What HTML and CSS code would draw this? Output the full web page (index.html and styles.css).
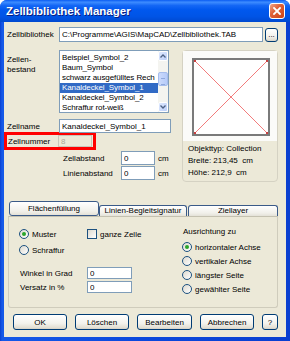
FILE: index.html
```html
<!DOCTYPE html>
<html lang="de">
<head>
  <meta charset="UTF-8">
  <meta name="viewport" content="width=device-width, initial-scale=1.0">
  <title>Zellbibliothek Manager</title>
  <link rel="stylesheet" href="styles.css">
</head>
<body>
  <div class="window">
    <div class="titlebar">
      <span class="title">Zellbibliothek Manager</span>
      <span class="close">
        <svg width="8" height="8" viewBox="0 0 8 8"><path d="M1 1L7 7M7 1L1 7" stroke="#fff" stroke-width="1.8" stroke-linecap="square"/></svg>
      </span>
    </div>

    <div class="frame">
      <div class="row-lib">
        <span class="lbl">Zellbibliothek</span>
        <input class="field lib-path" type="text" value="C:\Programme\AGIS\MapCAD\Zellbibliothek.TAB" readonly>
        <button class="btn dots">...</button>
      </div>

      <div class="main">
        <div class="left">
          <div class="row-list">
            <span class="lbl lbl-2">Zellen-<br>bestand</span>
            <div class="listbox">
              <ul class="items">
                <li>Beispiel_Symbol_2</li>
                <li>Baum_Symbol</li>
                <li>schwarz ausgefülltes Rech</li>
                <li class="sel">Kanaldeckel_Symbol_1</li>
                <li>Kanaldeckel_Symbol_2</li>
                <li>Schraffur rot-weiß</li>
              </ul>
              <div class="scrollbar">
                <span class="sb-btn">
                  <svg width="6" height="4" viewBox="0 0 6 4"><path d="M0.5 3.5L3 1L5.5 3.5" fill="none" stroke="#4d6185" stroke-width="1.3"/></svg>
                </span>
                <div class="sb-track">
                  <span class="sb-thumb"></span>
                </div>
                <span class="sb-btn">
                  <svg width="6" height="4" viewBox="0 0 6 4"><path d="M0.5 0.5L3 3L5.5 0.5" fill="none" stroke="#4d6185" stroke-width="1.3"/></svg>
                </span>
              </div>
            </div>
          </div>

          <div class="row-name">
            <span class="lbl">Zellname</span>
            <input class="field name" type="text" value="Kanaldeckel_Symbol_1" readonly>
          </div>

          <div class="row-num">
            <span class="lbl">Zellnummer</span>
            <input class="field num" type="text" value="8" disabled>
          </div>

          <div class="row-abs">
            <span class="abs-lbl">Zellabstand</span>
            <input class="field abs" type="text" value="0" readonly>
            <span class="unit">cm</span>
          </div>
          <div class="row-abs">
            <span class="abs-lbl">Linienabstand</span>
            <input class="field abs" type="text" value="0" readonly>
            <span class="unit">cm</span>
          </div>
        </div>

        <div class="preview">
          <div class="pic">
            <svg class="square" width="78" height="78" viewBox="0 0 78 78">
              <rect x="1" y="1" width="76" height="76" fill="#fff" stroke="#7a7a7a" stroke-width="2"/>
              <path d="M2 2L76 76M76 2L2 76" stroke="#f27c7c" stroke-width="1"/>
              <rect x="2" y="2" width="2" height="2" fill="#c84040"/>
              <rect x="74" y="2" width="2" height="2" fill="#c84040"/>
              <rect x="2" y="74" width="2" height="2" fill="#c84040"/>
              <rect x="74" y="74" width="2" height="2" fill="#c84040"/>
            </svg>
          </div>
          <div class="info">
            <div>Objekttyp: Collection</div>
            <div>Breite: 213,45&nbsp; cm</div>
            <div>Höhe: 212,9&nbsp; cm</div>
          </div>
        </div>
      </div>

      <div class="tabs">
        <span class="tab active">Flächenfüllung</span>
        <span class="tab t2">Linien-Begleitsignatur</span>
        <span class="tab t3">Ziellayer</span>
      </div>

      <div class="panel">
        <div class="pcol-left">
          <div class="prow">
            <span class="opt"><span class="radio on"></span><span class="txt">Muster</span></span>
            <span class="check"></span><span class="txt">ganze Zelle</span>
          </div>
          <div class="prow second">
            <span class="opt"><span class="radio"></span><span class="txt">Schraffur</span></span>
          </div>
          <div class="frow first">
            <span class="flbl">Winkel in Grad</span>
            <input class="field small" type="text" value="0" readonly>
          </div>
          <div class="frow">
            <span class="flbl">Versatz in %</span>
            <input class="field small" type="text" value="0" readonly>
          </div>
        </div>
        <div class="pcol-right">
          <div class="head">Ausrichtung zu</div>
          <div class="rrow"><span class="radio on"></span><span class="txt">horizontaler Achse</span></div>
          <div class="rrow"><span class="radio"></span><span class="txt">vertikaler Achse</span></div>
          <div class="rrow"><span class="radio"></span><span class="txt">längster Seite</span></div>
          <div class="rrow"><span class="radio"></span><span class="txt">gewählter Seite</span></div>
        </div>
      </div>

      <div class="buttons">
        <button class="btn w54">OK</button>
        <button class="btn w54">Löschen</button>
        <button class="btn w55">Bearbeiten</button>
        <button class="btn w54">Abbrechen</button>
        <button class="btn help">?</button>
      </div>
    </div>
  </div>
</body>
</html>
```

FILE: styles.css
```css
body {
  margin: 0;
  background: #fff;
  font-family: "Liberation Sans", Arial, sans-serif;
  font-size: 8px;
  color: #000;
}

.window {
  width: 290px;
  height: 341px;
  display: flex;
  flex-direction: column;
  background: linear-gradient(to right, #0a3fd0, #1559e8 2px, #0b48dc 50%, #0a3fd0);
  border-radius: 7px 7px 0 0;
  overflow: hidden;
}

.titlebar {
  height: 22px;
  flex: none;
  display: flex;
  align-items: center;
  padding: 0 5px 0 6px;
  background: linear-gradient(to bottom, #0a5cf2 0%, #3d8cff 10%, #1467f5 25%, #0058ee 45%, #0054e6 75%, #0049d0 100%);
}

.title {
  color: #fff;
  font-weight: bold;
  font-size: 11.5px;
  text-shadow: 1px 1px #0a1e80;
}

.close {
  margin-left: auto;
  width: 16px;
  height: 16px;
  box-sizing: border-box;
  border: 1px solid #fff;
  border-radius: 3px;
  background: linear-gradient(135deg, #efa58a 0%, #e0623a 40%, #cc4215 100%);
  display: flex;
  align-items: center;
  justify-content: center;
}

.frame {
  flex: 1;
  margin: 0 4px 4px 4px;
  background: #ece9d8;
  padding: 5px 0 0 3px;
}

.lbl {
  width: 52px;
  flex: none;
  white-space: nowrap;
}

.field {
  font: inherit;
  font-size: 8px;
  color: #000;
  box-sizing: border-box;
  border: 1px solid #7f9db9;
  background: #fff;
  padding: 0 2px;
  margin: 0;
  outline: none;
}

.btn {
  font: inherit;
  font-size: 8px;
  color: #000;
  box-sizing: border-box;
  border: 1px solid #003c74;
  border-radius: 3px;
  background: linear-gradient(to bottom, #fff 0%, #f3f2ec 60%, #e3dfd3 90%, #d6d0c5 100%);
  padding: 0;
  margin: 0;
}

.row-lib {
  display: flex;
  align-items: center;
  height: 15px;
}

.lib-path {
  width: 204px;
  height: 15px;
}

.dots {
  width: 13px;
  height: 14px;
  margin-left: 2px;
  line-height: 8px;
}

.main {
  display: flex;
  margin-top: 8px;
  height: 132px;
}

.left {
  width: 166px;
  flex: none;
}

.row-list {
  display: flex;
}

.lbl-2 {
  padding-top: 5px;
  line-height: 10px;
}

.listbox {
  width: 110px;
  height: 63px;
  box-sizing: border-box;
  border: 1px solid #7f9db9;
  background: #fff;
  display: flex;
}

.items {
  flex: 1;
  min-width: 0;
  list-style: none;
  margin: 0;
  padding: 2px 0 0 0;
  overflow: hidden;
}

.items li {
  height: 10px;
  line-height: 10px;
  padding-left: 2px;
  white-space: nowrap;
  letter-spacing: -0.1px;
}

.items li.sel {
  background: #316ac5;
  color: #fff;
}

.scrollbar {
  width: 10px;
  flex: none;
  display: flex;
  flex-direction: column;
  background: #f4f4f0;
}

.sb-btn {
  height: 10px;
  flex: none;
  box-sizing: border-box;
  border: 1px solid #fff;
  border-radius: 2px;
  background: linear-gradient(to bottom right, #dfe9fe, #bccffa);
  display: flex;
  align-items: center;
  justify-content: center;
}

.sb-track {
  flex: 1;
  padding-top: 11px;
}

.sb-thumb {
  display: block;
  height: 14px;
  box-sizing: border-box;
  border: 1px solid #a6bdec;
  border-radius: 2px;
  background-image: repeating-linear-gradient(to bottom, transparent 0 4px, #8ea8dd 4px 5px, transparent 5px 6px), linear-gradient(to right, #cbdafc, #b6cbf9);
  background-size: 4px 12px, 100% 100%;
  background-position: center 1px, 0 0;
  background-repeat: no-repeat;
}

.row-name {
  display: flex;
  align-items: center;
  margin-top: 6px;
}

.name {
  width: 112px;
  height: 14px;
}

.row-num {
  display: flex;
  align-items: center;
  width: 92px;
  height: 18px;
  box-sizing: border-box;
  border: 3px solid #f00;
  margin: -1px 0 0 -3px;
  padding-left: 1px;
}

.row-num .lbl {
  width: 50px;
}

.num {
  width: 34px;
  height: 12px;
  background: #ece9d8;
  border-color: #c9c7ba;
  color: #aca899;
}

.row-abs {
  display: flex;
  align-items: center;
  height: 14px;
  margin-top: 1px;
  padding-left: 56px;
}

.abs-lbl {
  width: 58px;
  flex: none;
}

.abs {
  width: 34px;
  height: 14px;
}

.unit {
  margin-left: 3px;
}

.preview {
  width: 96px;
  height: 132px;
  box-sizing: border-box;
  margin-left: 9px;
  border: 1px solid #d5d2c3;
  border-radius: 4px;
}

.pic {
  height: 90px;
  box-sizing: border-box;
  padding: 7px 0 0 9px;
  background: #fbfbf9;
}

.square {
  display: block;
}

.info {
  padding: 2px 0 0 5px;
  line-height: 12px;
}

.tabs {
  display: flex;
  align-items: flex-end;
  height: 15px;
  margin: 19px 0 0 2px;
}

.tab {
  box-sizing: border-box;
  height: 11px;
  border: 1px solid #3a5a88;
  border-bottom: none;
  border-radius: 3px 3px 0 0;
  background: linear-gradient(to bottom, #fff, #f1f0ea 70%, #e4e2d8);
  text-align: center;
  line-height: 10px;
  white-space: nowrap;
  overflow: hidden;
}

.tab.active {
  width: 90px;
  height: 15px;
  line-height: 13px;
  border-bottom: 1px solid #3a5a88;
  border-radius: 3px;
}

.t2 {
  width: 88px;
}

.t3 {
  width: 90px;
  margin-left: 1px;
}

.panel {
  display: flex;
  width: 270px;
  height: 92px;
  box-sizing: border-box;
  margin-left: 1px;
  border: 1px solid #cfccbc;
  border-top-color: #c4c1b0;
  border-radius: 0 0 3px 3px;
}

.pcol-left {
  width: 173px;
  flex: none;
  box-sizing: border-box;
  padding: 12px 0 0 10px;
}

.prow {
  display: flex;
  align-items: center;
  height: 10px;
}

.prow.second {
  margin-top: 6px;
}

.opt {
  width: 68px;
  display: flex;
  align-items: center;
}

.txt {
  margin-left: 3px;
  white-space: nowrap;
}

.radio {
  width: 10px;
  height: 10px;
  flex: none;
  box-sizing: border-box;
  border: 1px solid #1c5180;
  border-radius: 50%;
  background: linear-gradient(to bottom right, #dcd9cf, #fff);
  display: flex;
  align-items: center;
  justify-content: center;
}

.radio.on::after {
  content: "";
  width: 4px;
  height: 4px;
  border-radius: 50%;
  background: #2aa52a;
}

.check {
  width: 10px;
  height: 10px;
  flex: none;
  box-sizing: border-box;
  border: 1px solid #1c5180;
  background: linear-gradient(to bottom right, #dcd9cf, #fff);
}

.frow {
  display: flex;
  align-items: center;
  height: 12px;
  margin-top: 2px;
}

.frow.first {
  margin-top: 12px;
}

.flbl {
  width: 67px;
  margin-left: 1px;
}

.small {
  width: 45px;
  height: 12px;
}

.pcol-right {
  padding-top: 10px;
}

.head {
  line-height: 10px;
  margin-left: 1px;
}

.rrow {
  display: flex;
  align-items: center;
  height: 10px;
  margin-top: 4px;
}

.head + .rrow {
  margin-top: 5px;
}

.buttons {
  display: flex;
  gap: 8px;
  margin: 6px 0 0 6px;
}

.buttons .btn {
  height: 16px;
}

.w54 {
  width: 54px;
}

.w55 {
  width: 55px;
}

.help {
  width: 16px;
}
```
